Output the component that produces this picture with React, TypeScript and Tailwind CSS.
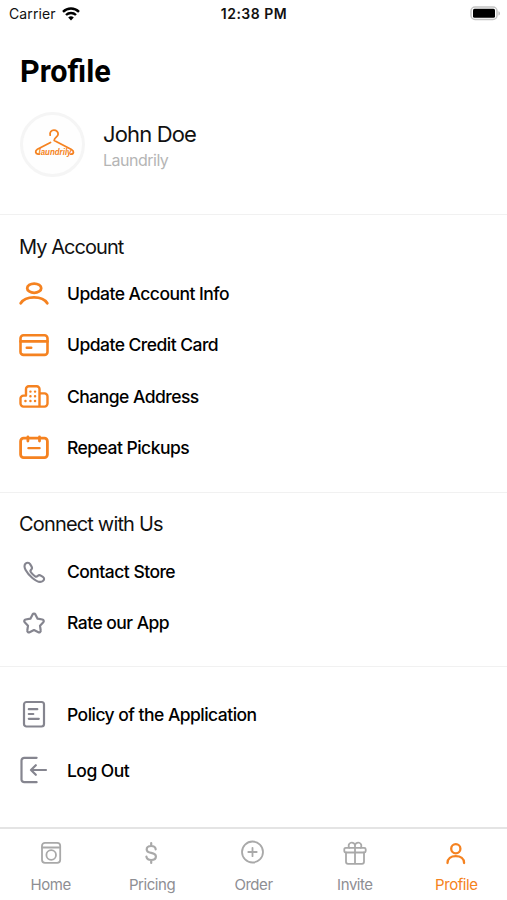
import type { ReactNode } from "react";

const lineProps = {
  fill: "none",
  stroke: "currentColor",
  strokeLinecap: "round" as const,
  strokeLinejoin: "round" as const,
};

function RowIcon({ children, width = 2.6 }: { children: ReactNode; width?: number }) {
  return (
    <svg width="32" height="32" viewBox="0 0 32 32" strokeWidth={width} {...lineProps}>
      {children}
    </svg>
  );
}

function TabIcon({ children, width = 1.8 }: { children: ReactNode; width?: number }) {
  return (
    <svg width="26" height="26" viewBox="0 0 26 26" strokeWidth={width} {...lineProps}>
      {children}
    </svg>
  );
}

const accountRows = [
  {
    label: "Update Account Info",
    icon: (
      <RowIcon width={2.8}>
        <ellipse cx="16.2" cy="10.2" rx="7" ry="4.6" />
        <path d="M2.7 25.3C5 21.5 10 19.4 16 19.4s11 2.1 13.3 5.9" />
      </RowIcon>
    ),
  },
  {
    label: "Update Credit Card",
    icon: (
      <RowIcon>
        <rect x="2.5" y="6.3" width="27" height="19.6" rx="3" />
        <path d="M2.5 12.4h27M8.8 18.8h4.4" />
      </RowIcon>
    ),
  },
  {
    label: "Change Address",
    icon: (
      <RowIcon width={2.4}>
        <path d="M21.5 25.6H5.5a3 3 0 0 1-3-3v-5a3 3 0 0 1 3-3H8V8a2.7 2.7 0 0 1 2.7-2.7h8A2.7 2.7 0 0 1 21.5 8v17.6ZM21.5 12.4h5a3 3 0 0 1 3 3v7.2a3 3 0 0 1-3 3h-5" />
        <path d="M12.4 10.6h.1M17 10.6h.1M12.4 15.3h.1M17 15.3h.1M7.4 20h.1M12.4 20h.1M17 20h.1" />
      </RowIcon>
    ),
  },
  {
    label: "Repeat Pickups",
    icon: (
      <RowIcon width={2.8}>
        <rect x="2.6" y="6.2" width="26.8" height="19.4" rx="3" />
        <path d="M9.9 5v4M21.5 5v4" />
        <path d="M10.4 16.2h11.2" strokeWidth="2.3" />
      </RowIcon>
    ),
  },
];

const connectRows = [
  {
    label: "Contact Store",
    icon: (
      <RowIcon width={2.1}>
        <path d="M7.4 7.8c1.5-1.4 3.6-1.4 4.7.3l1.5 2.5c.8 1.3.4 2.4-.6 3.3-.9.8-.8 1.6.2 2.8 1.2 1.5 2.4 2.7 3.9 3.6 1 .6 1.7.5 2.5-.3 1-.9 2.1-1.1 3.2-.4l2.1 1.3c1.5 1 1.6 2.7.3 3.8-2.3 2-6 1.4-10.8-2.7C8.3 16.8 4.8 10.8 7.4 7.8Z" />
      </RowIcon>
    ),
  },
  {
    label: "Rate our App",
    icon: (
      <RowIcon width={2.2}>
        <path d="M14.6 7.4a1.6 1.6 0 0 1 2.8 0l2.2 4.3 4.8.8a1.6 1.6 0 0 1 .9 2.7l-3.3 3.5.7 4.8a1.6 1.6 0 0 1-2.3 1.7L16 23.1l-4.4 2.1a1.6 1.6 0 0 1-2.3-1.7l.7-4.8-3.3-3.5a1.6 1.6 0 0 1 .9-2.7l4.8-.8Z" />
      </RowIcon>
    ),
  },
];

const otherRows = [
  {
    label: "Policy of the Application",
    icon: (
      <RowIcon width={2.2}>
        <rect x="6" y="4" width="20" height="24.5" rx="2.5" />
        <path d="M10.8 11.2h8.5M10.8 16h4.5M10.8 20.8h10" />
      </RowIcon>
    ),
  },
  {
    label: "Log Out",
    icon: (
      <RowIcon width={2.2}>
        <path d="M18.6 3.8H6.3A2.8 2.8 0 0 0 3.5 6.6v18.8a2.8 2.8 0 0 0 2.8 2.8h12.3M28 16H13M17.8 11.2L13 16l4.8 4.8" />
      </RowIcon>
    ),
  },
];

const tabs = [
  {
    label: "Home",
    icon: (
      <TabIcon>
        <rect x="4" y="2.8" width="18.2" height="20" rx="3" />
        <path d="M4 7.5h18" />
        <circle cx="13.2" cy="15" r="4.8" />
      </TabIcon>
    ),
  },
  {
    label: "Pricing",
    icon: (
      <TabIcon width={2.2}>
        <path d="M12.2 3v3M12.2 20v3M16.7 9.3C16.3 7 14.6 6 12.2 6 9.5 6 7.7 7.3 7.7 9.4c0 2.1 1.6 2.9 4.5 3.5 3.1.6 4.7 1.6 4.7 3.7 0 2.2-1.9 3.4-4.7 3.4-2.6 0-4.5-1.1-4.8-3.3" />
      </TabIcon>
    ),
  },
  {
    label: "Order",
    icon: (
      <TabIcon>
        <circle cx="12.5" cy="12" r="10.5" />
        <path d="M12.5 7.8v8.4M8.3 12h8.4" />
      </TabIcon>
    ),
  },
  {
    label: "Invite",
    icon: (
      <TabIcon>
        <rect x="2.3" y="7.8" width="21.4" height="4.7" rx="1.5" />
        <path d="M4 12.5v9.3a2 2 0 0 0 2 2h14a2 2 0 0 0 2-2v-9.3M13 7.8v16M13 7.8V6a3.2 3.2 0 1 0-5.7 1.8M13 7.8V6a3.2 3.2 0 1 1 5.7 1.8" />
      </TabIcon>
    ),
  },
  {
    label: "Profile",
    active: true,
    icon: (
      <TabIcon width={2.3}>
        <circle cx="12.8" cy="8.8" r="4.6" />
        <path d="M4.5 23c0-4.3 3.5-6.8 8.3-6.8s8.3 2.5 8.3 6.8" />
      </TabIcon>
    ),
  },
];

type RowProps = { label: string; icon: ReactNode };

function Row({ label, icon }: RowProps) {
  return (
    <li className="flex items-center gap-[17px]">
      {icon}
      <span className="text-[17.5px] leading-6 font-medium tracking-[-0.53px] whitespace-nowrap">
        {label}
      </span>
    </li>
  );
}

function HangerLogo() {
  return (
    <svg
      className="overflow-visible"
      width="42"
      height="34"
      viewBox="0 0 42 34"
      {...lineProps}
      strokeWidth="1.8"
    >
      <path d="M16.2 6.2c-.8-3.2 1.3-5 3.7-5 2.6 0 4.3 1.8 4.2 4-.1 3-3.8 3-3.9 6.3L37.5 20.5c2.8 1.5 2.6 4.5-.7 4.7M16.5 13.5L3.4 20.3C.8 21.8 1.3 24.9 4 25.2h1" />
      <text
        x="4.5"
        y="26"
        textLength="33"
        lengthAdjust="spacingAndGlyphs"
        className="fill-current font-['Liberation_Sans',sans-serif] text-[9.5px] leading-none font-bold italic"
        stroke="none"
      >
        laundrily
      </text>
    </svg>
  );
}

export default function App() {
  return (
    <div className="flex h-[900px] w-[507px] flex-col overflow-hidden bg-white font-['Inter',sans-serif] text-[#111]">
      <header className="grid h-[27px] shrink-0 grid-cols-3 items-center pr-[6px] pl-[9px]">
        <div className="flex items-center gap-[6px]">
          <span className="text-[14px] tracking-[0.1px]">Carrier</span>
          <svg width="18" height="14" viewBox="0 0 18 14" fill="none" stroke="#000" strokeWidth="2.4">
            <path d="M1 4.8a11.5 11.5 0 0 1 16 0M4 8a7.2 7.2 0 0 1 10 0" />
            <path d="M9 13.5L6.2 10.6a4 4 0 0 1 5.6 0Z" fill="#000" stroke="none" />
          </svg>
        </div>
        <span className="pr-[2px] text-center text-[14px] font-semibold tracking-[0.5px]">12:38 PM</span>
        <svg className="justify-self-end" width="32" height="16" viewBox="0 0 32 16">
          <rect x="2" y="1" width="26" height="12.5" rx="4" fill="#fff" stroke="#c4c4c4" strokeWidth="1.5" />
          <rect x="4" y="2.8" width="22" height="9" rx="1.5" fill="#000" />
          <path d="M29.5 5.2c1.8.6 1.8 3.8 0 4.4Z" fill="#b5b5b5" />
        </svg>
      </header>

      <section className="h-[188px] shrink-0 border-b border-[#f1f1f1] px-5 pt-[27px]">
        <h1 className="font-['Roboto',sans-serif] text-[30.5px] leading-9 font-bold text-black">Profile</h1>
        <div className="mt-[22px] flex items-center gap-[18px]">
          <div className="flex size-[65px] items-center justify-center rounded-full border-[3px] border-[#f5f5f5] bg-[#fefefe] pt-[2px] pl-[5px] text-[#f58220]">
            <HangerLogo />
          </div>
          <div className="pt-[3px]">
            <p className="text-[22px] leading-7 tracking-[-0.85px]">John Doe</p>
            <p className="text-[16px] leading-6 tracking-[-0.5px] text-[#b5b5b5]">Laundrily</p>
          </div>
        </div>
      </section>

      <section className="h-[278px] shrink-0 border-b border-[#f1f1f1] px-[18px] pt-[18px]">
        <h2 className="pl-px text-[20px] leading-7 tracking-[-0.95px]">My Account</h2>
        <ul className="mt-[17px] flex flex-col gap-[19.4px] text-black [&_svg]:text-[#f58220]">
          {accountRows.map((row) => (
            <Row key={row.label} {...row} />
          ))}
        </ul>
      </section>

      <section className="h-[174px] shrink-0 border-b border-[#f1f1f1] px-[18px] pt-[17px]">
        <h2 className="pl-px text-[20px] leading-7 tracking-[-0.83px]">Connect with Us</h2>
        <ul className="mt-[17.5px] flex flex-col gap-[19.4px] text-black [&_svg]:text-[#85858f]">
          {connectRows.map((row) => (
            <Row key={row.label} {...row} />
          ))}
        </ul>
      </section>

      <section className="grow px-[18px] pt-[31px]">
        <ul className="flex flex-col gap-6 text-black [&_span]:pt-px [&_svg]:text-[#85858f]">
          {otherRows.map((row) => (
            <Row key={row.label} {...row} />
          ))}
        </ul>
      </section>

      <nav className="grid h-[73px] shrink-0 grid-cols-5 border-t-2 border-[#e4e4e4] pt-[11px]">
        {tabs.map((tab) => (
          <a
            key={tab.label}
            className={`flex flex-col items-center gap-[9px] ${
              tab.active ? "text-[#f58220]" : "text-[#8e8e93] [&_svg]:text-[#a9a9a9]"
            }`}
          >
            {tab.icon}
            <span className="text-[15px] leading-5 tracking-[-0.45px]">{tab.label}</span>
          </a>
        ))}
      </nav>
    </div>
  );
}
